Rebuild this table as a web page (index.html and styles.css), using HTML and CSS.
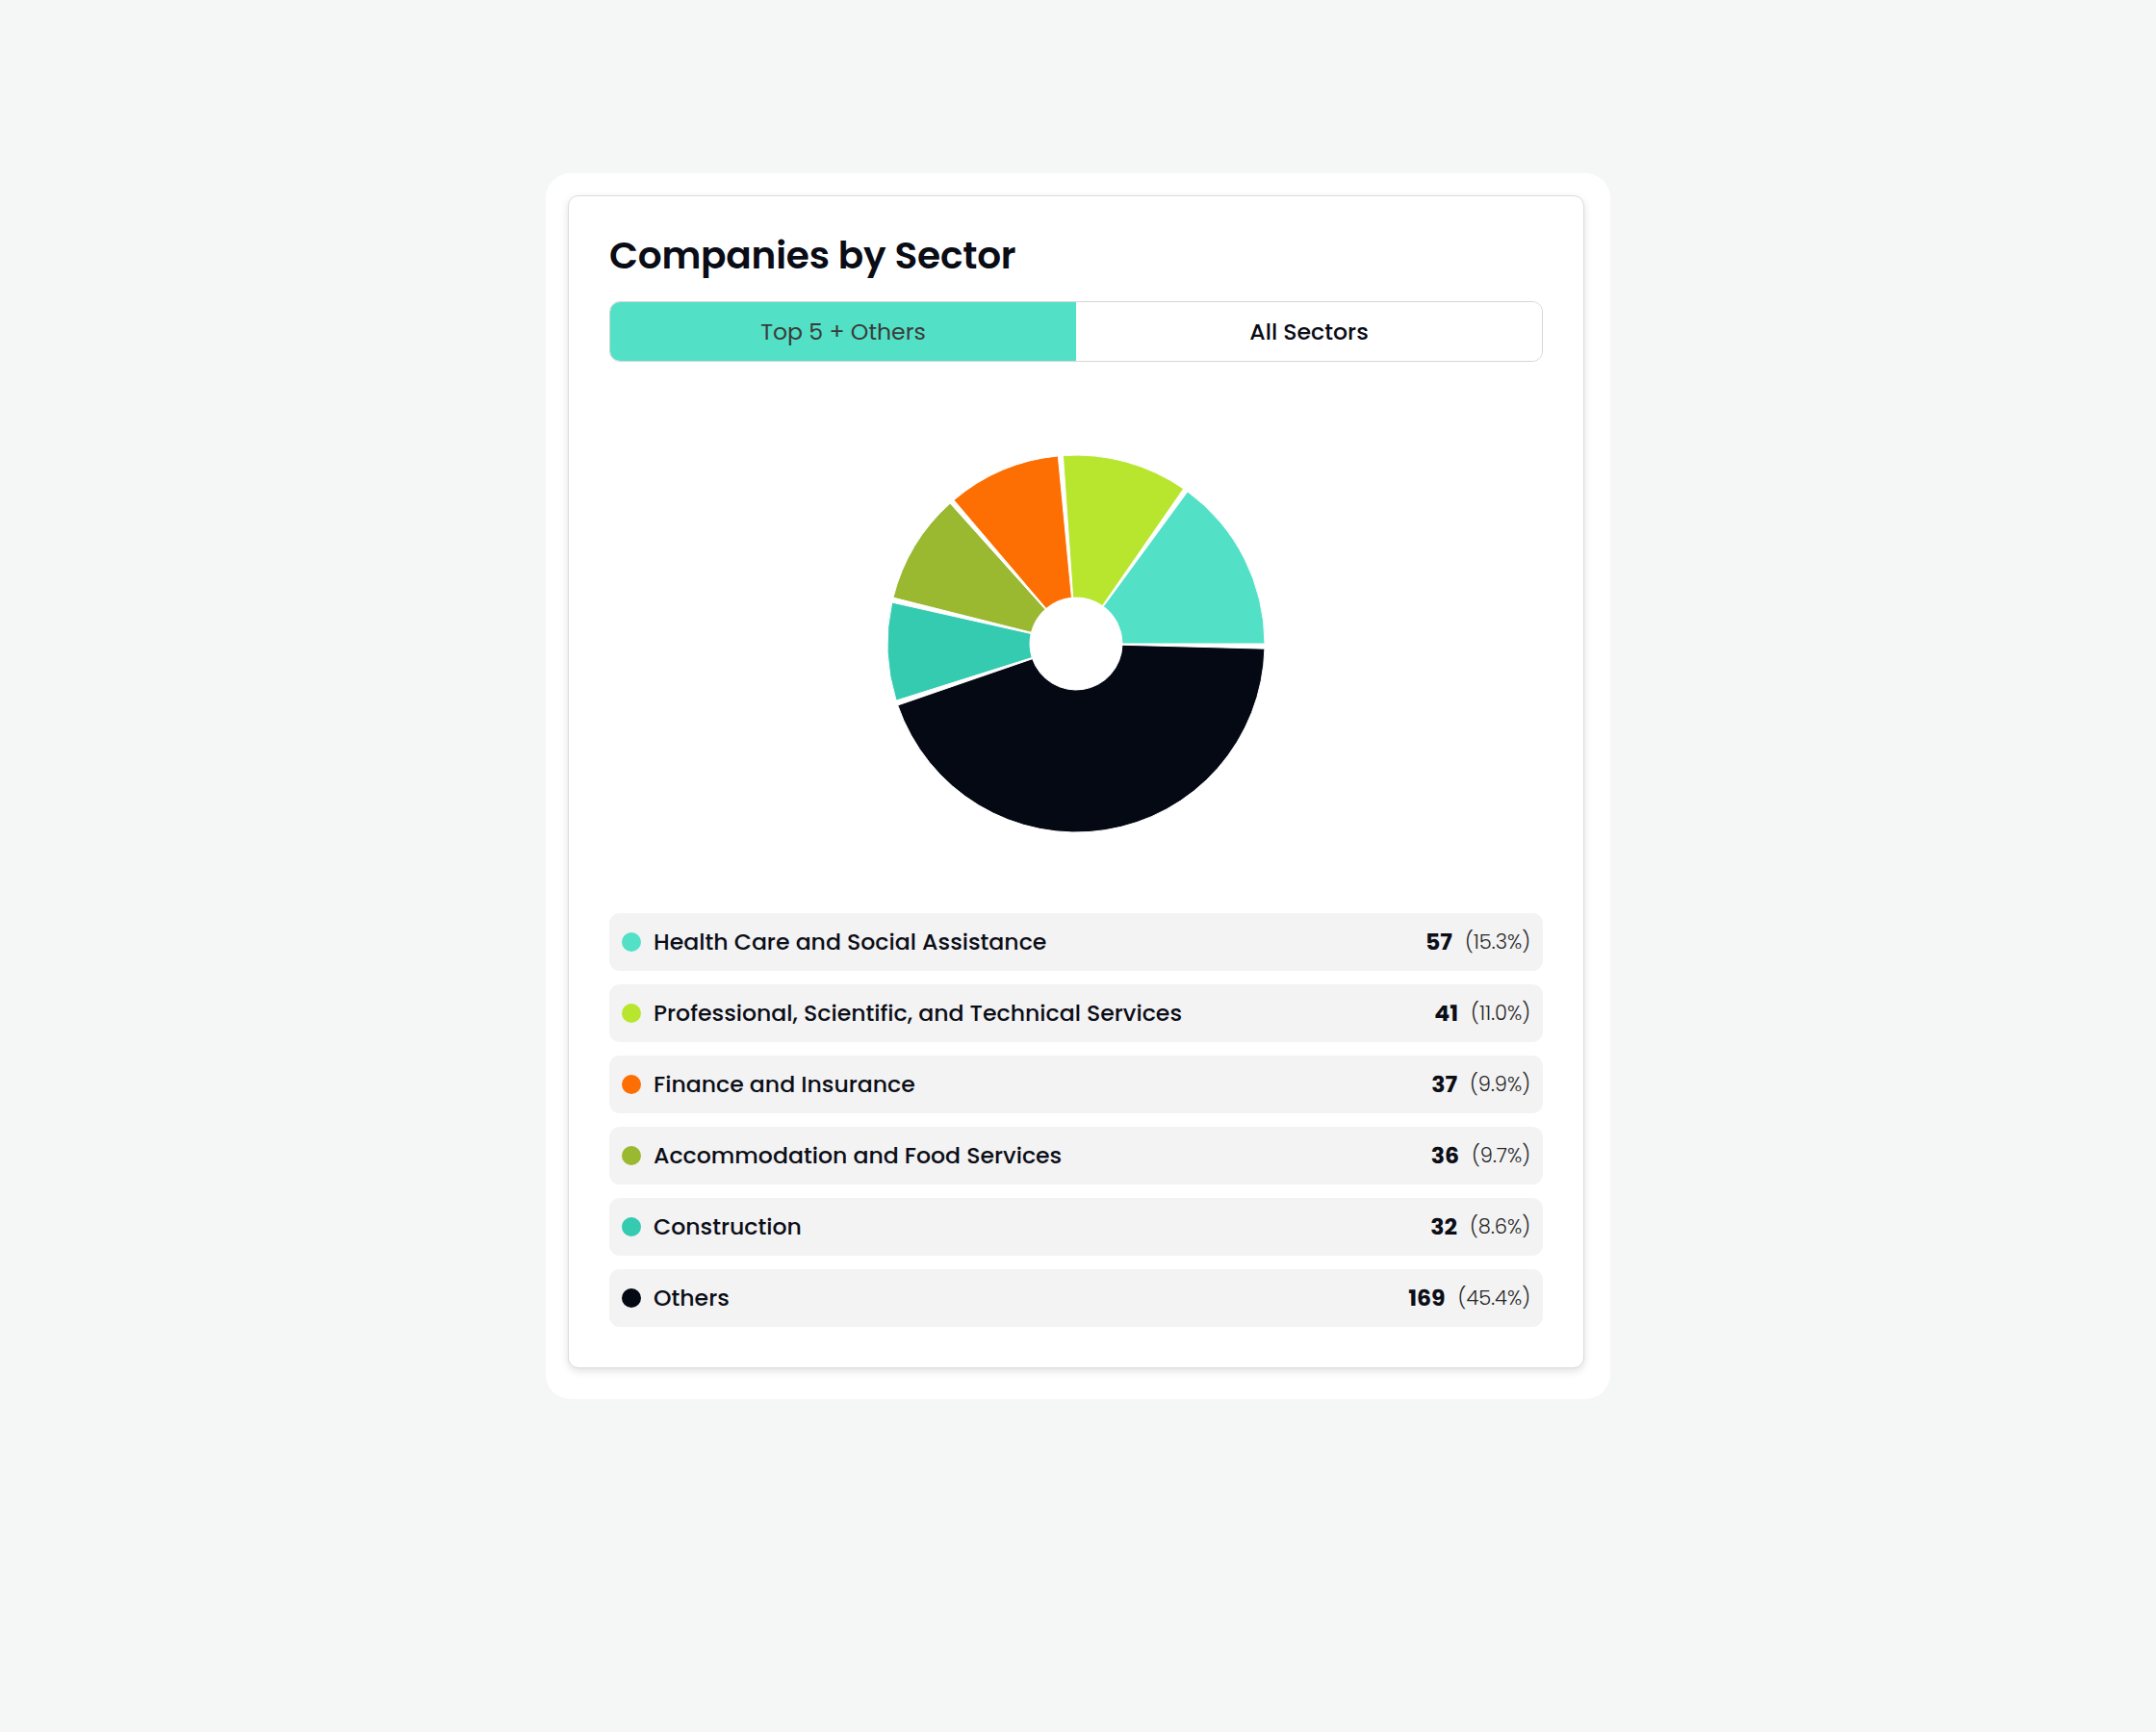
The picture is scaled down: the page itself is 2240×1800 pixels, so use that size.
FILE: index.html
```html
<!DOCTYPE html>
<html lang="en">
<head>
<meta charset="utf-8">
<title>Companies by Sector</title>
<link rel="stylesheet" href="styles.css">
</head>
<body>
<div class="shell">
  <section class="card">
    <h2 class="title">Companies by Sector</h2>
    <div class="toggle">
      <button class="toggle-btn active">Top 5 + Others</button>
      <button class="toggle-btn">All Sectors</button>
    </div>
    <div class="chart">
      <svg class="pie" width="440" height="440" viewBox="0 0 440 440">
        <path fill="#52e1c6" d="M416,220 A196,196 0 0 0 335.81,61.89 L248.36,181.28 A48,48 0 0 1 268,220 Z"/>
        <path fill="#b8e62e" d="M331.64,58.91 A196,196 0 0 0 206.43,24.47 L216.68,172.12 A48,48 0 0 1 247.34,180.55 Z"/>
        <path fill="#fd6f02" d="M201.32,24.90 A196,196 0 0 0 93.01,70.71 L188.90,183.44 A48,48 0 0 1 215.43,172.22 Z"/>
        <path fill="#9ab830" d="M89.16,74.08 A196,196 0 0 0 29.96,172.10 L173.46,208.27 A48,48 0 0 1 187.96,184.26 Z"/>
        <path fill="#34cbb1" d="M28.76,177.07 A196,196 0 0 0 33.11,279.07 L174.23,234.47 A48,48 0 0 1 173.17,209.49 Z"/>
        <path fill="#040914" d="M34.72,283.95 A196,196 0 0 0 415.93,225.13 L267.98,221.26 A48,48 0 0 1 174.63,235.66 Z"/>
      </svg>
    </div>
    <ul class="legend">
      <li class="row"><span class="dot c1"></span><span class="label">Health Care and Social Assistance</span><span class="count">57</span><span class="pct">(15.3%)</span></li>
      <li class="row"><span class="dot c2"></span><span class="label">Professional, Scientific, and Technical Services</span><span class="count">41</span><span class="pct">(11.0%)</span></li>
      <li class="row"><span class="dot c3"></span><span class="label">Finance and Insurance</span><span class="count">37</span><span class="pct">(9.9%)</span></li>
      <li class="row"><span class="dot c4"></span><span class="label">Accommodation and Food Services</span><span class="count">36</span><span class="pct">(9.7%)</span></li>
      <li class="row"><span class="dot c5"></span><span class="label">Construction</span><span class="count">32</span><span class="pct">(8.6%)</span></li>
      <li class="row"><span class="dot c6"></span><span class="label">Others</span><span class="count">169</span><span class="pct">(45.4%)</span></li>
    </ul>
  </section>
</div>
</body>
</html>
```
FILE: styles.css
```css
* { box-sizing: border-box; }
html, body { margin: 0; padding: 0; }
body {
  background: #f5f7f6;
  font-family: Poppins, Inter, "Noto Sans", sans-serif;
  color: #0a0c16;
  padding-top: 180px;
  min-height: 1800px;
}
.shell {
  width: 1106px;
  margin: 0 auto;
  background: #ffffff;
  border-radius: 26px;
  padding: 23px 27px 32px 23px;
}
.card {
  border: 1px solid #dcdcdc;
  border-radius: 11px;
  padding: 42px;
  background: #fff;
  box-shadow: 0 3px 8px rgba(0, 0, 0, 0.12);
}
.title {
  margin: 0;
  font-size: 39px;
  line-height: 40px;
  font-weight: 600;
  letter-spacing: -0.2px;
  color: #0a0c16;
}
.toggle {
  margin-top: 27px;
  display: flex;
  height: 63px;
  border: 1px solid #d6d6d6;
  border-radius: 11px;
  overflow: hidden;
}
.toggle-btn {
  flex: 1;
  border: 0;
  margin: 0;
  padding: 0;
  background: #fff;
  font-family: inherit;
  font-size: 23.6px;
  font-weight: 500;
  color: #0a0c16;
}
.toggle-btn.active {
  background: #52e1c6;
  color: #3b3b3b;
  font-weight: 400;
}
.chart {
  display: flex;
  justify-content: center;
  padding: 73px 0 60px;
}
.pie { display: block; }
.pie path { stroke: #fff; stroke-width: 1; }
.legend {
  list-style: none;
  margin: 0;
  padding: 0;
  display: flex;
  flex-direction: column;
  gap: 14px;
}
.row {
  height: 60px;
  background: #f3f3f3;
  border-radius: 11px;
  padding: 0 13px 2px 13px;
  display: flex;
  align-items: center;
}
.dot {
  width: 20px;
  height: 20px;
  border-radius: 50%;
  margin: 2px 13px 0 0;
  flex: none;
}
.c1 { background: #52e1c6; }
.c2 { background: #b8e62e; }
.c3 { background: #fd6f02; }
.c4 { background: #9ab830; }
.c5 { background: #34cbb1; }
.c6 { background: #040914; }
.label {
  flex: 1;
  font-size: 23.6px;
  font-weight: 500;
  color: #0c0e18;
}
.count {
  font-size: 23.6px;
  font-weight: 700;
  color: #0c0e18;
  margin-right: 13px;
}
.pct {
  font-size: 21px;
  font-weight: 300;
  color: #262626;
}
```
